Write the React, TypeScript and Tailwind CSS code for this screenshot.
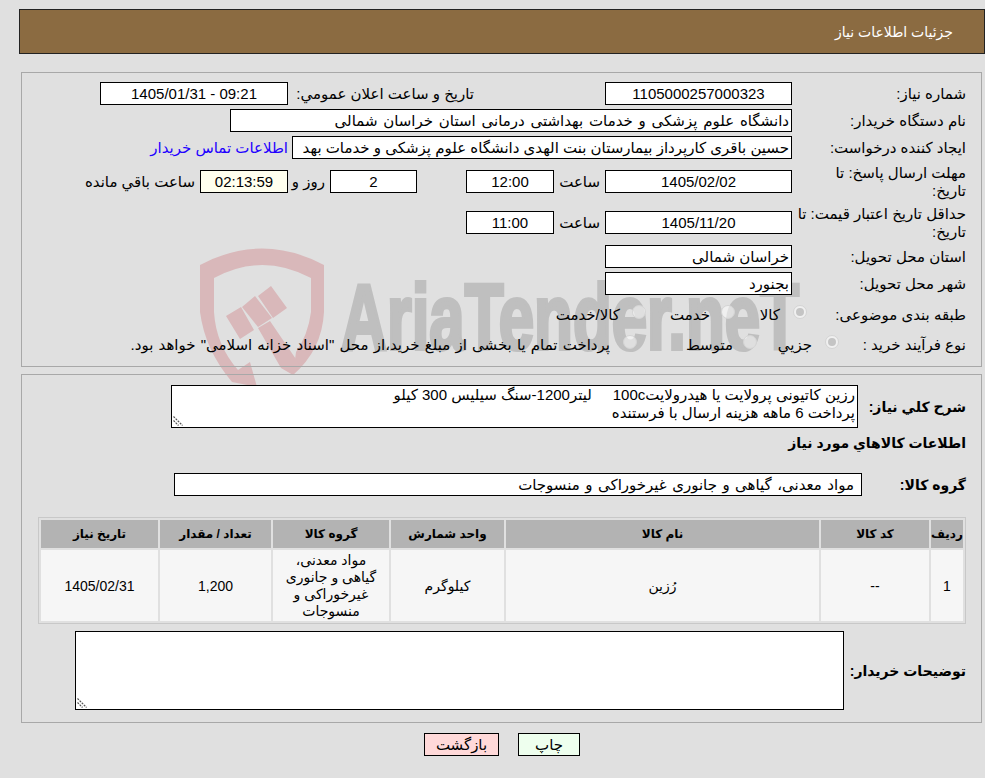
function Field({ className, center, tint, children }: { className: string; center?: boolean; tint?: boolean; children?: React.ReactNode }) {
  return (
    <div className={`h-[23px] border border-black flex items-center ${tint ? "bg-[#ffffee]" : "bg-white"} ${className} ${center ? "justify-center" : "pr-[2px]"} whitespace-nowrap overflow-hidden shrink-0`}>
      {children}
    </div>
  );
}

function Radio({ checked }: { checked?: boolean }) {
  return (
    <span className="w-[14px] h-[14px] -mt-[6px] rounded-full border border-[#d4d4d4] bg-white/50 flex items-center justify-center shrink-0">
      {checked && <span className="w-[8px] h-[8px] rounded-full bg-[#c4c4c4]" />}
    </span>
  );
}

function Grip() {
  return (
    <svg className="absolute left-[2px] bottom-[2px] pointer-events-none" width="10" height="10" viewBox="0 0 10 10">
      <path d="M0.5 0.5 L9.5 9.5" stroke="#555" strokeWidth="1.2" strokeDasharray="2 1" />
      <path d="M0.5 4.5 L5.5 9.5" stroke="#555" strokeWidth="1.2" strokeDasharray="2 1" />
    </svg>
  );
}

function Watermark() {
  return (
    <svg className="absolute left-0 top-0 z-0 pointer-events-none [direction:ltr]" width="985" height="400" viewBox="0 0 985 400">
      {/* shield */}
      <path
        fill="#d9b8ba"
        d="M200 265 Q262 232 324 265 L324 312 Q322 350 293 375 L296 352 Q308 335 311 312 L311 278 Q262 252 214 278 L214 312 Q216 345 238 370 L250 362 L257 387 L232 382 Q205 350 200 312 Z"
      />
      {/* hammer */}
      <path
        fill="#d9b8ba"
        d="M226 316 L241 307 L254 330 L240 339 Z M242 307 L255 296 L272 318 L258 327 Z M258 296 L271 286 L287 308 L273 318 Z M258 328 L270 321 L300 365 L293 375 L281 368 Z"
      />
      <text x="341" y="349" fill="#bfbfbf" stroke="#bfbfbf" strokeWidth="4" fontFamily="'Liberation Sans', sans-serif" fontWeight="700" fontSize="92" textLength="458" lengthAdjust="spacingAndGlyphs">
        AriaTender.neT
      </text>
    </svg>
  );
}

const headers = ["ردیف", "کد کالا", "نام کالا", "واحد شمارش", "گروه کالا", "تعداد / مقدار", "تاریخ نیاز"];
const widths = ["w-[32px] text-[11px]", "w-[108px]", "w-[313px]", "w-[113px]", "w-[116px]", "w-[111px]", "w-[117px]"];

export default function App() {
  return (
    <div dir="rtl" className="relative w-[985px] h-[778px] overflow-hidden bg-[#e0e0e0] text-[15px] leading-[18px] text-black font-['Liberation_Sans','DejaVu_Sans',sans-serif]">
      <Watermark />
      <div className="relative z-10 pt-[9px] pl-[19px]">
        {/* Header */}
        <div className="h-[45px] bg-[#8b6b41] border border-[#222] flex items-center pr-[31px] text-white text-[14px]">جزئیات اطلاعات نیاز</div>

        {/* Main info panel */}
        <div className="mt-[18px] ml-[2px] mr-[3px] h-[295px] border border-[#a8a8a8] pt-[9px] pr-[15px]">
          <div className="flex items-center h-[23px]">
            <div className="w-[174px]">شماره نیاز:</div>
            <Field className="w-[187px]" center>1105000257000323</Field>
            <div className="w-[131px] shrink-0" />
            <div className="w-[186px] shrink-0 whitespace-nowrap">تاریخ و ساعت اعلان عمومي:</div>
            <Field className="w-[188px]" center><span dir="ltr">1405/01/31 - 09:21</span></Field>
          </div>

          <div className="flex items-center h-[23px] mt-[4px]">
            <div className="w-[174px]">نام دستگاه خریدار:</div>
            <Field className="w-[562px] [word-spacing:1.6px]">دانشگاه علوم پزشکی و خدمات بهداشتی درمانی استان خراسان شمالی</Field>
          </div>

          <div className="flex items-center h-[23px] mt-[4px]">
            <div className="w-[174px]">ایجاد کننده درخواست:</div>
            <Field className="w-[500px]">حسین باقری کارپرداز بیمارستان بنت الهدی دانشگاه علوم پزشکی و خدمات بهد</Field>
            <a className="pr-[4px] text-[#2200ff] whitespace-nowrap">اطلاعات تماس خریدار</a>
          </div>

          <div className="flex items-center h-[23px] mt-[11px]">
            <div className="w-[174px] pl-[6px] shrink-0">مهلت ارسال پاسخ: تا تاریخ:</div>
            <Field className="w-[187px]" center>1405/02/02</Field>
            <div className="w-[51px] pr-[5px] shrink-0">ساعت</div>
            <Field className="w-[88px]" center>12:00</Field>
            <div className="w-[49px] shrink-0" />
            <Field className="w-[87px]" center>2</Field>
            <div className="w-[42px] pr-[5px] shrink-0 whitespace-nowrap">روز و</div>
            <Field className="w-[88px]" center tint>02:13:59</Field>
            <div className="pr-[5px] whitespace-nowrap">ساعت باقي مانده</div>
          </div>

          <div className="flex items-center h-[23px] mt-[18px]">
            <div className="w-[174px] shrink-0">حداقل تاریخ اعتبار قیمت: تا تاریخ:</div>
            <Field className="w-[187px]" center>1405/11/20</Field>
            <div className="w-[51px] pr-[5px] shrink-0">ساعت</div>
            <Field className="w-[88px]" center>11:00</Field>
          </div>

          <div className="flex items-center h-[23px] mt-[11px]">
            <div className="w-[174px]">استان محل تحویل:</div>
            <Field className="w-[187px]">خراسان شمالی</Field>
          </div>

          <div className="flex items-center h-[23px] mt-[4px]">
            <div className="w-[174px]">شهر محل تحویل:</div>
            <Field className="w-[187px]">بجنورد</Field>
          </div>

          <div className="flex items-center h-[23px] mt-[8px]">
            <div className="w-[159px] shrink-0">طبقه بندی موضوعی:</div>
            <Radio checked />
            <div className="w-[58px] pr-[13px] shrink-0">کالا</div>
            <Radio />
            <div className="w-[75px] pr-[11px] shrink-0">خدمت</div>
            <Radio />
            <div className="pr-[12px] whitespace-nowrap">کالا/خدمت</div>
          </div>

          <div className="flex items-center h-[23px] mt-[7px]">
            <div className="w-[127px] shrink-0">نوع فرآیند خرید :</div>
            <Radio checked />
            <div className="w-[68px] pr-[13px] shrink-0">جزيي</div>
            <Radio />
            <div className="w-[106px] pr-[10px] shrink-0">متوسط</div>
            <Radio />
            <div className="pr-[13px] whitespace-nowrap [word-spacing:1px]">پرداخت تمام یا بخشی از مبلغ خرید،از محل "اسناد خزانه اسلامی" خواهد بود.</div>
          </div>
        </div>

        {/* Items panel */}
        <div className="mt-[7px] ml-[2px] mr-[3px] h-[349px] border border-[#a8a8a8] pr-[15px]">
          <div className="flex items-center mt-[10px] h-[43px]">
            <div className="w-[108px] font-bold text-[14px] shrink-0">شرح کلي نیاز:</div>
            <div className="relative w-[687px] h-[43px] shrink-0">
              <textarea
                readOnly
                dir="rtl"
                className="block w-full h-full bg-white border border-black pr-[2px] pl-[3px] resize-none overflow-hidden leading-[18px] outline-none"
                value={"رزین کاتیونی پرولایت یا هیدرولایت100c     لیتر1200-سنگ سیلیس 300 کیلو\nپرداخت 6 ماهه هزینه ارسال با فرستنده"}
              />
              <Grip />
            </div>
          </div>

          <div className="font-bold text-[14px] mt-[6px]">اطلاعات کالاهاي مورد نیاز</div>

          <div className="flex items-center mt-[21px]">
            <div className="w-[104px] font-bold text-[14px] shrink-0">گروه کالا:</div>
            <Field className="w-[688px] pr-[7px] [word-spacing:1.3px]">مواد معدنی، گیاهی و جانوری غیرخوراکی و منسوجات</Field>
          </div>

          {/* Items table */}
          <table className="mt-[21px] w-[928px] table-fixed border-separate border-spacing-[2px] border border-[#c8c8c8] text-[14px]">
            <thead>
              <tr>
                {headers.map((h, i) => (
                  <th key={h} className={`${widths[i]} h-[28px] p-0 bg-[#b3b3b3] font-bold text-[12px] text-center whitespace-nowrap`}>
                    {h}
                  </th>
                ))}
              </tr>
            </thead>
            <tbody>
              <tr className="bg-[#f6f6f6] text-center">
                <td className="h-[71px] p-0">1</td>
                <td className="p-0">--</td>
                <td className="p-0">رُزین</td>
                <td className="p-0">کیلوگرم</td>
                <td className="py-0 px-[5px] leading-[17px]">مواد معدنی، گیاهی و جانوری غیرخوراکی و منسوجات</td>
                <td className="p-0">1,200</td>
                <td className="p-0">1405/02/31</td>
              </tr>
            </tbody>
          </table>

          <div className="flex items-center mt-[7px]">
            <div className="w-[122px] font-bold text-[14px] shrink-0">توضیحات خریدار:</div>
            <div className="relative w-[769px] h-[79px] shrink-0">
              <textarea readOnly dir="rtl" className="block w-full h-full bg-white border border-black resize-none outline-none" value="" />
              <Grip />
            </div>
          </div>
        </div>

        {/* Actions */}
        <div className="flex justify-center gap-[19px] mt-[10px]">
          <button className="w-[62px] h-[23px] bg-[#eeffee] border border-black">چاپ</button>
          <button className="w-[75px] h-[23px] bg-[#ffd9d9] border border-black">بازگشت</button>
        </div>
      </div>
    </div>
  );
}
